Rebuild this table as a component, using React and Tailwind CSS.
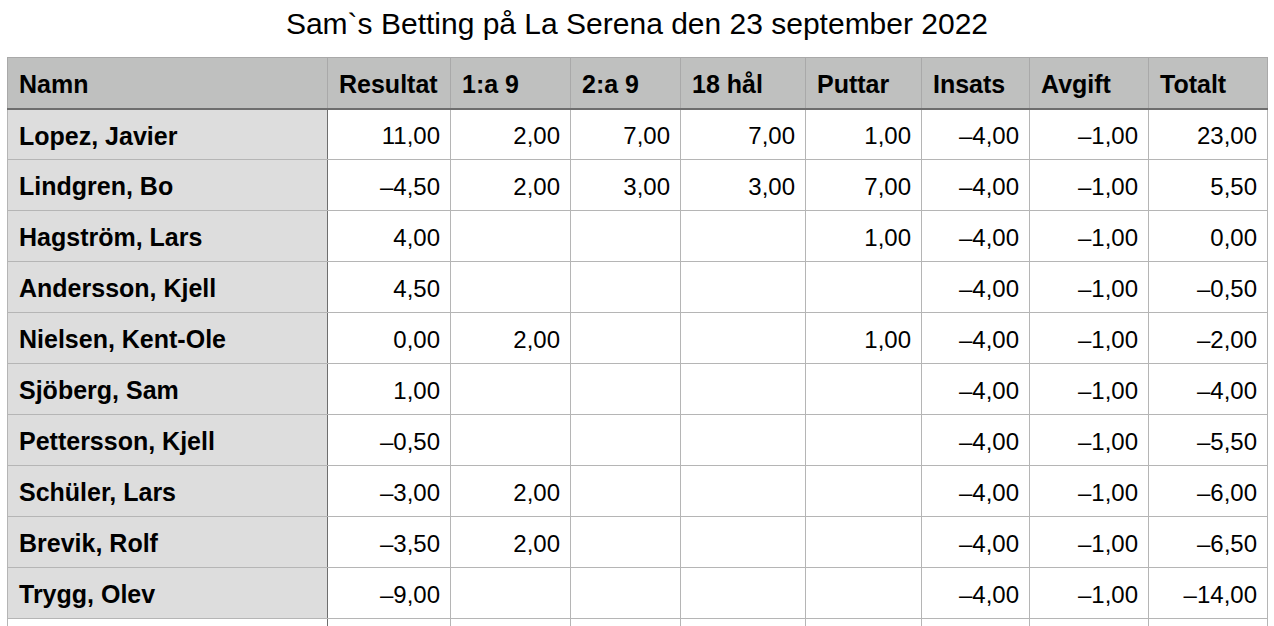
import React from 'react';

const COLUMNS = ['Namn', 'Resultat', '1:a 9', '2:a 9', '18 hål', 'Puttar', 'Insats', 'Avgift', 'Totalt'];

const ROWS = [
    ['Lopez, Javier', '11,00', '2,00', '7,00', '7,00', '1,00', '–4,00', '–1,00', '23,00'],
    ['Lindgren, Bo', '–4,50', '2,00', '3,00', '3,00', '7,00', '–4,00', '–1,00', '5,50'],
    ['Hagström, Lars', '4,00', '', '', '', '1,00', '–4,00', '–1,00', '0,00'],
    ['Andersson, Kjell', '4,50', '', '', '', '', '–4,00', '–1,00', '–0,50'],
    ['Nielsen, Kent-Ole', '0,00', '2,00', '', '', '1,00', '–4,00', '–1,00', '–2,00'],
    ['Sjöberg, Sam', '1,00', '', '', '', '', '–4,00', '–1,00', '–4,00'],
    ['Pettersson, Kjell', '–0,50', '', '', '', '', '–4,00', '–1,00', '–5,50'],
    ['Schüler, Lars', '–3,00', '2,00', '', '', '', '–4,00', '–1,00', '–6,00'],
    ['Brevik, Rolf', '–3,50', '2,00', '', '', '', '–4,00', '–1,00', '–6,50'],
    ['Trygg, Olev', '–9,00', '', '', '', '', '–4,00', '–1,00', '–14,00'],
];

const App = () => {
    return (
        <div className="w-[1274px] h-[626px] overflow-hidden bg-white text-black font-['Liberation_Sans',Arial,sans-serif]">
            {/* Rubrik */}
            <h1 className="h-[57px] pb-[10px] flex items-center justify-center text-[30px] leading-none">
                Sam`s Betting på La Serena den 23 september 2022
            </h1>

            <table className="ml-[7px] border-collapse table-fixed w-[1260px] text-[24px]">
                <colgroup>
                    <col className="w-[320px]" />
                    <col className="w-[123px]" />
                    <col className="w-[120px]" />
                    <col className="w-[110px]" />
                    <col className="w-[125px]" />
                    <col className="w-[116px]" />
                    <col className="w-[108px]" />
                    <col className="w-[119px]" />
                    <col className="w-[119px]" />
                </colgroup>
                <thead>
                    <tr className="h-[51px] bg-[#bfc0bf]">
                        {COLUMNS.map((c) => (
                            <th
                                key={c}
                                className="border border-[#a9a9a9] border-b-2 border-b-[#6e6e6e] px-[11px] pt-[3px] text-left text-[25px] font-bold"
                            >
                                {c}
                            </th>
                        ))}
                    </tr>
                </thead>
                <tbody>
                    {ROWS.map((row) => (
                        <tr key={row[0]} className="h-[51px]">
                            {row.map((v, i) =>
                                i === 0 ? (
                                    <td
                                        key={i}
                                        className="border border-[#b5b5b5] border-r-[#6e6e6e] bg-[#dddddd] px-[11px] pt-[4px] text-[25px] font-bold"
                                    >
                                        {v}
                                    </td>
                                ) : (
                                    <td key={i} className="border border-[#b5b5b5] pr-[10px] pt-[4px] text-right">
                                        {v}
                                    </td>
                                )
                            )}
                        </tr>
                    ))}
                    {/* nästa rad, avskuren */}
                    <tr className="h-[51px]">
                        {COLUMNS.map((c, i) => (
                            <td
                                key={c}
                                className={
                                    i === 0
                                        ? 'border border-[#b5b5b5] border-r-[#6e6e6e] border-t-[#6e6e6e] bg-white'
                                        : 'border border-[#b5b5b5] border-t-[#6e6e6e]'
                                }
                            />
                        ))}
                    </tr>
                </tbody>
            </table>
        </div>
    );
};

export default App;
